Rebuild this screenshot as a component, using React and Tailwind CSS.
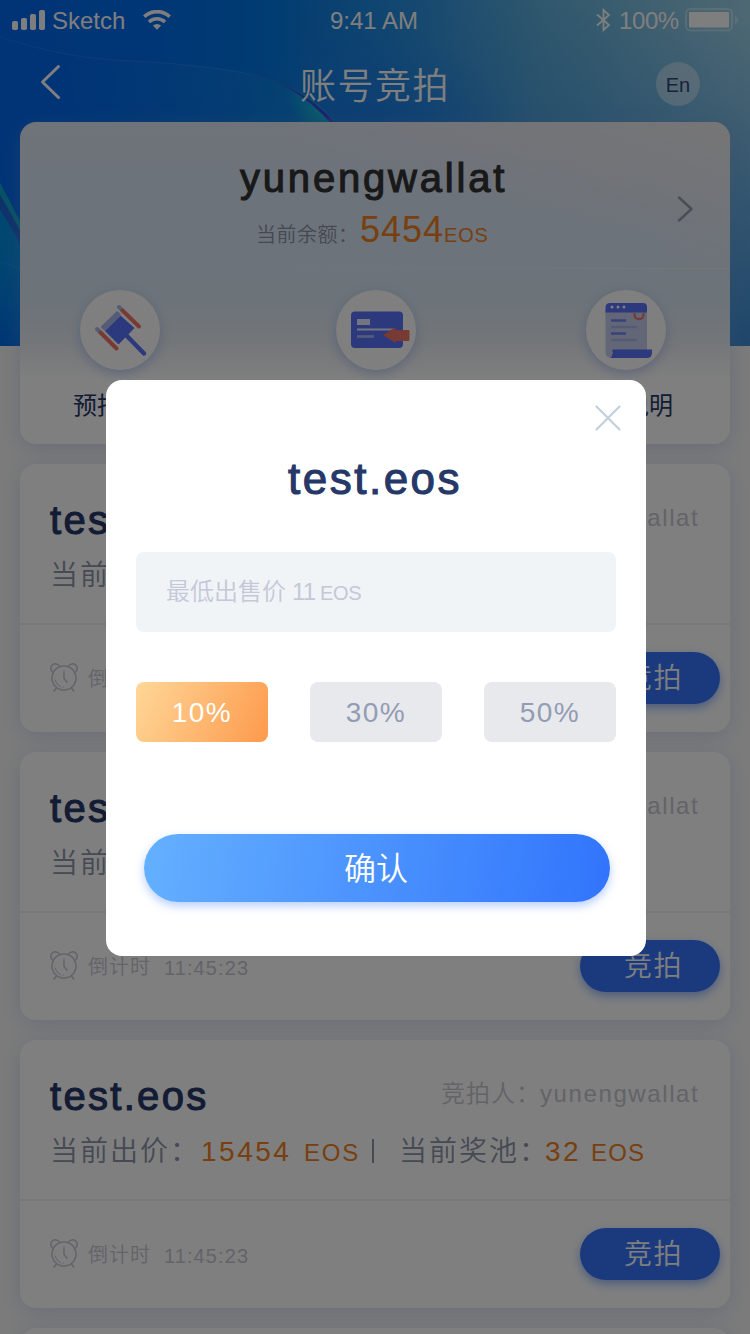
import React from "react";

const stroke = "[-webkit-text-stroke:1.1px_currentColor]";

function HeaderArt() {
  return (
    <svg className="absolute inset-0" width="750" height="346" viewBox="0 0 750 346" fill="none">
      <defs>
        <linearGradient id="base" x1="0" y1="0" x2="750" y2="0" gradientUnits="userSpaceOnUse">
          <stop offset="0" stopColor="#0068ee" />
          <stop offset="0.2" stopColor="#006cec" />
          <stop offset="0.36" stopColor="#0278e4" />
          <stop offset="0.52" stopColor="#228ee2" />
          <stop offset="0.72" stopColor="#60b0da" />
          <stop offset="1" stopColor="#9cd0e6" />
        </linearGradient>
        <linearGradient id="deep" x1="600" y1="0" x2="560" y2="346" gradientUnits="userSpaceOnUse">
          <stop offset="0" stopColor="#1e78d8" stopOpacity="0" />
          <stop offset="1" stopColor="#1e78d0" stopOpacity="0.8" />
        </linearGradient>
        <radialGradient id="blue" cx="0" cy="0" r="1" gradientTransform="translate(370 140) scale(150 110)" gradientUnits="userSpaceOnUse">
          <stop offset="0" stopColor="#1878ec" stopOpacity="0.7" />
          <stop offset="1" stopColor="#1878ec" stopOpacity="0" />
        </radialGradient>
        <linearGradient id="wave" x1="60" y1="120" x2="340" y2="90" gradientUnits="userSpaceOnUse">
          <stop offset="0" stopColor="#0068ee" />
          <stop offset="0.6" stopColor="#0878e6" />
          <stop offset="1" stopColor="#0c8ade" />
        </linearGradient>
        <radialGradient id="teal" cx="0" cy="0" r="1" gradientTransform="translate(318 112) rotate(46) scale(42 22)" gradientUnits="userSpaceOnUse">
          <stop offset="0" stopColor="#14b8d4" />
          <stop offset="0.5" stopColor="#12a4dc" stopOpacity="0.7" />
          <stop offset="1" stopColor="#14a0e0" stopOpacity="0" />
        </radialGradient>
        <linearGradient id="edge" x1="0" y1="0" x2="340" y2="0" gradientUnits="userSpaceOnUse">
          <stop offset="0" stopColor="#1074f0" />
          <stop offset="0.7" stopColor="#2482ea" />
          <stop offset="0.85" stopColor="#3458d8" />
          <stop offset="0.96" stopColor="#3440d8" />
          <stop offset="1" stopColor="#4c88d8" />
        </linearGradient>
        <linearGradient id="left" x1="0" y1="200" x2="0" y2="346" gradientUnits="userSpaceOnUse">
          <stop offset="0" stopColor="#0090e4" />
          <stop offset="0.4" stopColor="#008ce4" />
          <stop offset="0.7" stopColor="#007ee8" />
          <stop offset="1" stopColor="#006ce8" />
        </linearGradient>
      </defs>
      <rect width="750" height="346" fill="url(#base)" />
      <rect x="300" width="450" height="346" fill="url(#deep)" />
      <rect x="200" width="350" height="346" fill="url(#blue)" />
      <path d="M0 37C40 50 80 59 130 61C180 63 240 70 270 79C298 89 318 104 337 124V346H0Z" fill="url(#wave)" />
      <path d="M240 124C262 112 280 98 284 84C304 92 320 104 337 124Z" fill="url(#teal)" />
      <path d="M0 37C40 50 80 59 130 61C180 63 240 70 270 79" stroke="url(#edge)" strokeWidth="1" />
      <path d="M270 79C298 89 318 104 337 124L330 122C314 105 296 90 270 79Z" fill="url(#edge)" />
      <path d="M0 183C7 196 14 210 20 222V346H0Z" fill="url(#left)" />
      <path d="M0 194C8 208 15 220 20 229V244C13 230 7 220 0 210Z" fill="#1c64d4" />
      <path d="M0 183C7 196 14 210 20 221V230C14 219 7 206 0 195Z" fill="#10a4cc" />
      <path d="M0 262L20 268" stroke="#1c8ce8" />
    </svg>
  );
}

function StatusBar() {
  return (
    <div className="flex h-10 items-center pl-3 pr-[11px] text-2xl leading-none text-[#fdfdfd]">
      <svg width="33" height="20" viewBox="0 0 33 20" fill="currentColor">
        <rect x="0" y="11" width="6" height="9" rx="1.8" />
        <rect x="9" y="8" width="6" height="12" rx="1.8" />
        <rect x="18" y="4" width="6" height="16" rx="1.8" />
        <rect x="27" y="0" width="6" height="20" rx="1.8" />
      </svg>
      <span className="ml-[7px] w-[91px] pt-0.5">Sketch</span>
      <svg width="28" height="20" viewBox="0 0 28 20" fill="none" stroke="currentColor" strokeWidth="3.6">
        <path d="M1.3 6.7a18.5 18.5 0 0 1 25.4 0" />
        <path d="M6 12a11.6 11.6 0 0 1 16 0" />
        <path d="M9.8 15.6a6 6 0 0 1 8.4 0L14 19.8Z" fill="currentColor" stroke="none" />
      </svg>
      <span className="ml-[159px] flex-1 pt-0.5">9:41 AM</span>
      <svg width="15" height="24" viewBox="0 0 15 24" fill="none" stroke="currentColor" strokeWidth="1.8">
        <path d="M1 6.5L13 17L7.5 22V2L13 7L1 17.5" />
      </svg>
      <span className="ml-2 w-[66px] pt-0.5 tracking-[-0.4px]">100%</span>
      <svg width="54" height="24" viewBox="0 0 54 24" fill="none">
        <rect x="1" y="1" width="46" height="21.5" rx="4.5" stroke="#fff" strokeOpacity="0.35" strokeWidth="2" />
        <rect x="4" y="4" width="40" height="15.5" rx="1" fill="#fdfdfd" />
        <path d="M50 8q3 1 3 4t-3 4Z" fill="#fff" fillOpacity="0.35" />
      </svg>
    </div>
  );
}

function NavBar() {
  return (
    <div className="flex h-[82px] items-start pl-10 pr-[50px]">
      <svg className="mt-[23px]" width="22" height="38" viewBox="0 0 22 38" fill="none" stroke="#fff" strokeWidth="3" strokeLinecap="round" strokeLinejoin="round">
        <path d="M18.5 3.5L2.5 19L18.5 34.5" />
      </svg>
      <h1 className="ml-[238px] mt-[24px] flex-1 text-[36px] font-[350] leading-[46px] tracking-[1.5px] text-white">账号竞拍</h1>
      <div className="mt-[22px] flex size-11 items-center justify-center rounded-full bg-white/40 pt-0.5 text-xl text-[#364578]">En</div>
    </div>
  );
}

function Gavel() {
  return (
    <svg width="80" height="80" viewBox="0 0 80 80" fill="none">
      <path d="M21 36.500L36.500 21.500Q37.500 21 38.500 22L41 24.500L25 41L21 37.500Z" fill="#a8b8ec" />
      <path d="M25 41L40.500 25.500L54.500 38L39.500 53.500Q38.500 54.500 37.500 53.500Z" fill="#5a72fa" />
      <path d="M46 45L64 63.500" stroke="#5a72fa" strokeWidth="4.500" strokeLinecap="round" />
      <path d="M39 17L42.500 20.500" stroke="#a8b8ec" strokeWidth="4" strokeLinecap="round" />
      <path d="M42.500 20.500L59 36.500" stroke="#f07468" strokeWidth="4" strokeLinecap="round" />
      <path d="M17 39L20.500 42.500" stroke="#a8b8ec" strokeWidth="4" strokeLinecap="round" />
      <path d="M20.500 42.500L36.500 58.500" stroke="#f07468" strokeWidth="4" strokeLinecap="round" />
    </svg>
  );
}

function CardIcon() {
  return (
    <svg width="80" height="80" viewBox="0 0 80 80" fill="none">
      <rect x="15" y="21.500" width="52" height="36.500" rx="4" fill="#5a72fa" />
      <rect x="21" y="29" width="13" height="6" fill="#e8ecff" />
      <path d="M21 39.500H57" stroke="#e8ecff" strokeWidth="2.200" />
      <path d="M21 46.500H38" stroke="#a8b8f4" strokeWidth="2.600" />
      <path d="M47 45L59.500 37V40H72.500Q73.500 40 73.500 41V49.500Q73.500 51 72 51H59.500V53Z" fill="#f07468" />
    </svg>
  );
}

function DocIcon() {
  return (
    <svg width="80" height="80" viewBox="0 0 80 80" fill="none">
      <path d="M19.500 20H61V62H26Q26 67.500 23.500 67.500Q19.500 67 19.500 62Z" fill="#c4cdec" />
      <path d="M19.500 22.500V17.500Q19.500 13 24 13H57Q61 13 61 17V22.500Z" fill="#5a72fa" />
      <g fill="#fff"><circle cx="26" cy="17" r="1.500" /><circle cx="32" cy="17" r="1.500" /><circle cx="38" cy="17" r="1.500" /></g>
      <path d="M48.500 23Q48 29 53 29.200Q58 29 57.500 23" stroke="#f07468" strokeWidth="2.200" />
      <path d="M25 30.500H40M25 43.500H40" stroke="#6c84f4" strokeWidth="2.600" />
      <path d="M25 37H51M25 50H51" stroke="#a4b4ec" strokeWidth="2.400" />
      <path d="M26.500 59.500H66V62.500Q66 68 61 68H24Q26.500 66 26.500 63Z" fill="#5a72fa" />
    </svg>
  );
}

function Feature({ icon, label, className }) {
  return (
    <div className={"flex w-24 flex-col items-center " + className}>
      <div className="size-20 rounded-full bg-white shadow-[0_4px_12px_rgba(110,140,230,0.4)]">{icon}</div>
      <div className="mt-[18px] h-9 whitespace-nowrap pl-0.5 text-2xl leading-9 text-[#263868]">{label}</div>
    </div>
  );
}

function AccountCard() {
  return (
    <section className="mx-5 h-[322px] rounded-2xl bg-[linear-gradient(180deg,#dee6f4_0%,#d8e6f6_35%,#d8e6f2_55%,#e6ecf2_68%,#ffffff_80%)] shadow-[0_4px_20px_rgba(130,160,220,0.35)]">
      <div className="flex h-[147px] rounded-t-2xl border-b border-white/10 bg-[linear-gradient(200deg,rgba(250,240,230,0.5)_0%,rgba(250,240,230,0)_45%)]">
        <div className="flex-1">
          <div className={"ml-[220px] mt-[32px] h-12 text-[40px] leading-[48px] tracking-[2.800px] text-[#333] " + stroke}>yunengwallat</div>
          <div className="ml-[236px] mt-1.5 flex h-11 items-baseline whitespace-nowrap text-xl leading-[44px]">
            <span className="w-[104px] font-[350] tracking-[0.500px] text-[#8c92a4]">当前余额：</span>
            <span className="w-[84px] text-[36px] tracking-[1px] text-[#f08020]">5454</span>
            <span className="tracking-[0.800px] text-[#f08020]">EOS</span>
          </div>
        </div>
        <svg className="mr-[36px] mt-[73px]" width="18" height="28" viewBox="0 0 18 28" fill="none" stroke="#949cae" strokeWidth="2.500" strokeLinecap="round" strokeLinejoin="round">
          <path d="M3 2.500L15.500 14L3 25.500" />
        </svg>
      </div>
      <div className="flex pt-[21px]">
        <Feature className="ml-[52px]" icon={<Gavel />} label="预拍账号" />
        <Feature className="ml-40" icon={<CardIcon />} label="账号转让" />
        <Feature className="ml-[154px]" icon={<DocIcon />} label={<span className="relative -left-0.5">竞拍说明</span>} />
      </div>
    </section>
  );
}

function Clock() {
  return (
    <svg width="28" height="30" viewBox="0 0 28 30" fill="none" stroke="#c6c6d4" strokeWidth="1.500" strokeLinecap="round" className="-mt-0.5">
      <circle cx="14" cy="16" r="12" />
      <path d="M2.500 10A4.600 4.600 0 1 1 9.500 4.300M18.500 4.300A4.600 4.600 0 1 1 25.500 10" />
      <path d="M14 9.500V16.500L17 20M6 26.500L4 29M22 26.500L23.500 29" />
      <path d="M5 18Q6.500 23 10.500 24.600M13 25.200H13.500" strokeWidth="1" />
    </svg>
  );
}

function AuctionCard() {
  return (
    <section className="mx-5 mt-5 h-[268px] shrink-0 rounded-2xl bg-white shadow-[0_4px_20px_rgba(130,160,220,0.3)]">
      <div className="h-[161px] border-b-2 border-[#f1f1f4] pl-[30px]">
        <div className="flex h-[82px] items-start justify-between pr-[30px] pt-[33px]">
          <h2 className={"text-[40px] leading-[46px] tracking-[2.300px] text-[#263868] " + stroke}>test.eos</h2>
          <div className="flex whitespace-nowrap text-2xl leading-[42px] text-[#c6c6d0]">
            <span className="w-[99px] font-[350] tracking-[1px]">竞拍人：</span>
            <span className="w-[160px] tracking-[1.600px]">yunengwallat</span>
          </div>
        </div>
        <div className="flex h-[60px] items-baseline whitespace-nowrap text-[28px] leading-[60px] text-[#f08020]">
          <span className="w-[151px] font-[350] tracking-[2px] text-[#8c94a8]">当前出价：</span>
          <span className="w-[103px] tracking-[2.500px]">15454</span>
          <span className="w-[68px] text-2xl tracking-[1.800px]">EOS</span>
          <span className="h-6 w-0.5 translate-y-[2px] bg-[#8c94a8]" />
          <span className="ml-[25px] w-[146px] font-[350] tracking-[2px] text-[#8c94a8]">当前奖池：</span>
          <span className="w-[46px] tracking-[2.500px]">32</span>
          <span className="text-2xl tracking-[1.200px]">EOS</span>
        </div>
      </div>
      <div className="flex h-[107px] pl-[30px] pr-2.5 pt-[27px]">
        <div className="flex h-[52px] flex-1 items-center text-xl text-[#c6c6d0]">
          <Clock />
          <span className="ml-2.5 w-[76px] pt-0.5 font-[350] tracking-[1px]">倒计时</span>
          <span className="pt-[3px] tracking-[1.100px]">11:45:23</span>
        </div>
        <button className="h-[52px] w-[140px] rounded-full bg-[#3474fa] pl-[7px] pt-0.5 text-[28px] font-[350] leading-[50px] tracking-[1.500px] text-white shadow-[0_4px_10px_rgba(52,116,250,0.5)]">竞拍</button>
      </div>
    </section>
  );
}

function Percent({ children, active }) {
  return (
    <button
      className={
        "flex h-[60px] w-[132px] items-center justify-center rounded-lg pt-0.5 text-[28px] tracking-[1.500px] " +
        (active ? "bg-[linear-gradient(115deg,#ffd798_0%,#fd9a4c_100%)] text-white" : "bg-[#e8e9ed] text-[#929cb4]")
      }
    >
      {children}
    </button>
  );
}

function BidDialog() {
  return (
    <div className="absolute left-[106px] top-[380px] h-[576px] w-[540px] rounded-2xl bg-white px-[30px]">
      <div className="flex h-[74px] justify-end pt-[25px]">
        <svg className="-mr-[5px]" width="26" height="26" viewBox="0 0 26 26" stroke="#c0d0de" strokeWidth="2.200" strokeLinecap="round">
          <path d="M1.500 1.500L24.500 24.500M24.500 1.500L1.500 24.500" />
        </svg>
      </div>
      <h2 className={"ml-[152px] h-[98px] text-[44px] leading-[50px] tracking-[2.500px] text-[#263868] " + stroke}>test.eos</h2>
      <div className="flex h-20 items-baseline rounded-lg bg-[#f0f4f7] pl-[30px] text-2xl leading-[80px] text-[#c4c8d8]">
        <span className="w-[126px] font-[350]">最低出售价</span>
        <span className="w-[28px] tracking-[-0.800px]">11</span>
        <span className="text-xl tracking-[-0.300px]">EOS</span>
      </div>
      <div className="mt-[50px] flex justify-between">
        <Percent active>10%</Percent>
        <Percent>30%</Percent>
        <Percent>50%</Percent>
      </div>
      <button className="ml-2 mt-[92px] h-[68px] w-[466px] rounded-full bg-[linear-gradient(98deg,#64b0ff_0%,#3174fc_100%)] pr-0.5 pt-[3px] text-[32px] font-[350] leading-[65px] text-white shadow-[0_4px_10px_rgba(52,116,250,0.35)]">确认</button>
    </div>
  );
}

export default function App() {
  return (
    <div className="relative h-[1334px] w-[750px] overflow-hidden bg-[#f7f7f7] font-['Liberation_Sans','Noto_Sans_CJK_SC',sans-serif]">
      <HeaderArt />
      <div className="relative flex flex-col">
        <StatusBar />
        <NavBar />
        <AccountCard />
        <AuctionCard />
        <AuctionCard />
        <AuctionCard />
        <section className="mx-5 mt-5 h-[268px] shrink-0 rounded-2xl bg-white shadow-[0_4px_20px_rgba(130,160,220,0.3)]" />
      </div>
      <div className="absolute inset-0 bg-black/50" />
      <BidDialog />
    </div>
  );
}
